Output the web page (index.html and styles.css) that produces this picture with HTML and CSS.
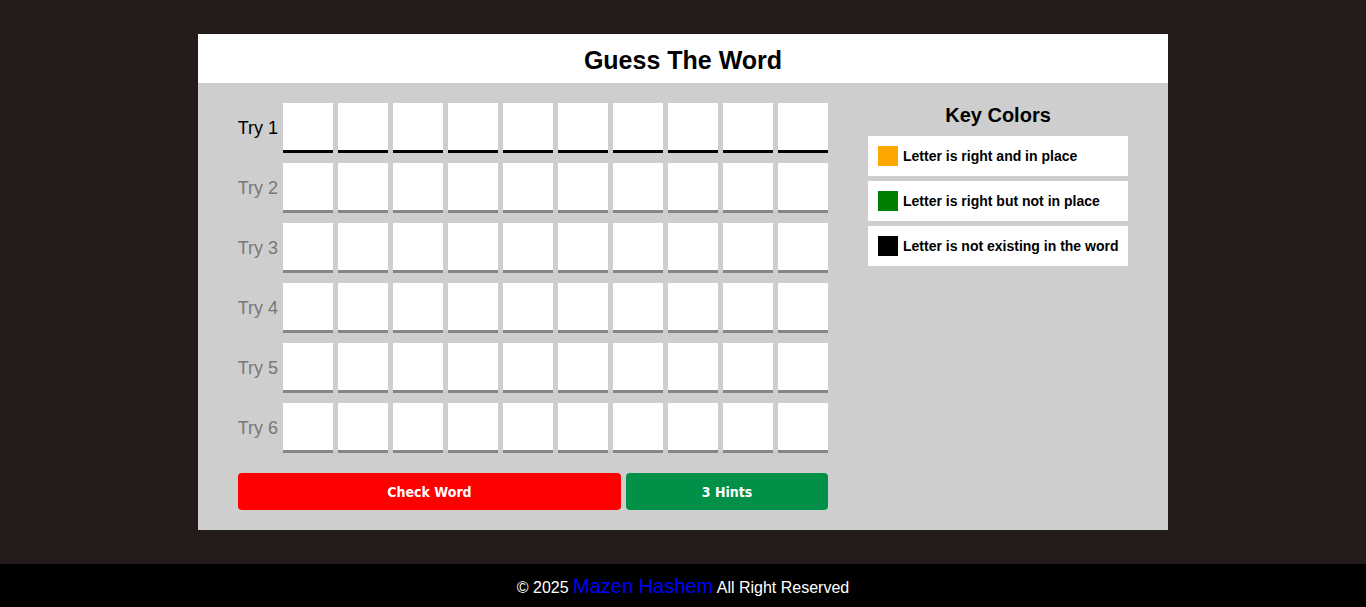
FILE: index.html
```html
<!DOCTYPE html>
<html lang="en">
<head>
<meta charset="utf-8">
<title>Guess The Word</title>
<link rel="stylesheet" href="styles.css">
</head>
<body>
<div class="page">
  <main class="game">
    <h1 class="title">Guess The Word</h1>
    <div class="board">
      <div class="play">
        <div class="tries">
          <div class="row active"><span class="label">Try 1</span><div class="cells"><i></i><i></i><i></i><i></i><i></i><i></i><i></i><i></i><i></i><i></i></div></div>
          <div class="row"><span class="label">Try 2</span><div class="cells"><i></i><i></i><i></i><i></i><i></i><i></i><i></i><i></i><i></i><i></i></div></div>
          <div class="row"><span class="label">Try 3</span><div class="cells"><i></i><i></i><i></i><i></i><i></i><i></i><i></i><i></i><i></i><i></i></div></div>
          <div class="row"><span class="label">Try 4</span><div class="cells"><i></i><i></i><i></i><i></i><i></i><i></i><i></i><i></i><i></i><i></i></div></div>
          <div class="row"><span class="label">Try 5</span><div class="cells"><i></i><i></i><i></i><i></i><i></i><i></i><i></i><i></i><i></i><i></i></div></div>
          <div class="row"><span class="label">Try 6</span><div class="cells"><i></i><i></i><i></i><i></i><i></i><i></i><i></i><i></i><i></i><i></i></div></div>
        </div>
        <div class="actions">
          <button class="btn check">Check Word</button>
          <button class="btn hint">3 Hints</button>
        </div>
      </div>
      <aside class="key">
        <h2 class="key-title">Key Colors</h2>
        <div class="key-item"><span class="swatch orange"></span>Letter is right and in place</div>
        <div class="key-item"><span class="swatch green"></span>Letter is right but not in place</div>
        <div class="key-item"><span class="swatch black"></span>Letter is not existing in the word</div>
      </aside>
    </div>
  </main>
</div>
<footer class="footer">&copy; 2025 <span class="author">Mazen Hashem</span> All Right Reserved</footer>
</body>
</html>
```
FILE: styles.css
```css
* { box-sizing: border-box; }
html, body { margin: 0; padding: 0; }
body {
  background: #241b1b;
  font-family: "Liberation Sans", Arial, sans-serif;
  height: 607px;
  display: flex;
  flex-direction: column;
}
.page {
  flex: 1;
  padding-top: 34px;
}
.game {
  width: 970px;
  margin: 0 auto;
  background: #cecece;
}
.title {
  margin: 0;
  height: 49px;
  line-height: 52px;
  background: #fff;
  text-align: center;
  font-size: 25px;
  font-weight: bold;
  color: #000;
}
.board {
  display: flex;
  gap: 40px;
  padding: 20px 40px;
}
.play { width: 590px; }
.tries {
  display: flex;
  flex-direction: column;
  gap: 10px;
}
.row {
  display: flex;
  align-items: center;
  justify-content: flex-end;
  gap: 5px;
}
.label {
  font-size: 18px;
  color: #777;
  white-space: nowrap;
}
.row.active .label { color: #000; }
.cells {
  display: flex;
  gap: 5px;
}
.cells i {
  display: block;
  width: 50px;
  height: 50px;
  background: #fff;
  border-bottom: 3px solid #868686;
}
.row.active .cells i { border-bottom-color: #000; }
.actions {
  display: flex;
  gap: 5px;
  margin-top: 20px;
}
.btn {
  height: 37px;
  border: none;
  border-radius: 4px;
  color: #fff;
  font-family: "DejaVu Sans Condensed", "DejaVu Sans", sans-serif;
  font-weight: bold;
  font-size: 14px;
  padding: 0;
}
.check { width: 383px; background: #ff0000; }
.hint { width: 202px; background: #009048; }
.key { width: 260px; }
.key-title {
  margin: 0;
  height: 33px;
  line-height: 24px;
  text-align: center;
  font-size: 20px;
  font-weight: bold;
}
.key-item {
  display: flex;
  align-items: center;
  gap: 5px;
  height: 40px;
  padding: 0 0 0 10px;
  margin-bottom: 5px;
  background: #fff;
  font-size: 14px;
  font-weight: bold;
  white-space: nowrap;
}
.swatch {
  width: 20px;
  height: 20px;
  flex: none;
}
.orange { background: #ffa500; }
.green { background: #008000; }
.black { background: #000; }
.footer {
  height: 43px;
  background: #000;
  color: #fff;
  text-align: center;
  font-size: 16px;
  line-height: 44px;
}
.author {
  color: #0000ff;
  font-size: 20px;
}
```
